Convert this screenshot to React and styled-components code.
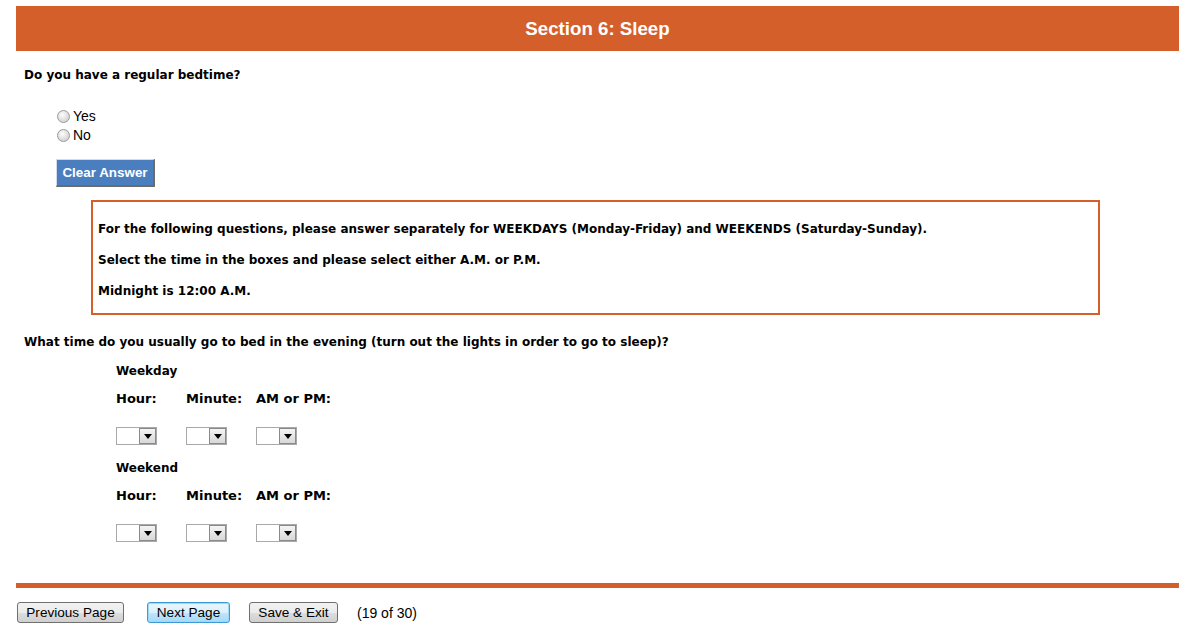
import React from "react";
import { styled, createGlobalStyle } from "styled-components";

const GlobalStyle = createGlobalStyle`
  body {
    margin: 0;
    background: #fff;
    font-family: "DejaVu Sans", Verdana, sans-serif;
    color: #000;
  }
`;

const Page = styled.div`
  width: 1194px;
  padding: 6px 15px 0 16px;
  box-sizing: border-box;
`;

const Header = styled.div`
  height: 45px;
  background: #d45f2b;
  color: #fff;
  font-family: "Liberation Sans", Arial, sans-serif;
  font-weight: bold;
  font-size: 18.7px;
  display: flex;
  align-items: center;
  justify-content: center;
`;

const Question = styled.div`
  font-size: 12px;
  font-weight: bold;
  padding-left: 8px;
  margin-top: ${(p) => p.$top}px;
  line-height: 14px;
`;

const Options = styled.div`
  display: flex;
  flex-direction: column;
  gap: 5px;
  padding-left: 41px;
  margin-top: 27px;
`;

const Option = styled.label`
  display: flex;
  align-items: center;
  gap: 3px;
  font-family: "Liberation Sans", Arial, sans-serif;
  font-size: 14px;
  height: 14px;
`;

const Radio = styled.span`
  width: 13px;
  height: 13px;
  border-radius: 50%;
  border: 1px solid #9a9a9a;
  background: radial-gradient(circle at 40% 35%, #fdfdfd, #d6d6d6 70%, #c4c4c4);
  box-sizing: border-box;
`;

const ClearButton = styled.button`
  margin: 17px 0 0 40px;
  width: 99px;
  height: 28px;
  background: #4a7ebf;
  color: #fff;
  font-family: "Liberation Sans", Arial, sans-serif;
  font-weight: bold;
  font-size: 13.4px;
  border: none;
  border-top: 1px solid #d0dcec;
  border-left: 1px solid #d0dcec;
  border-right: 2px solid #6b6b6b;
  border-bottom: 2px solid #6b6b6b;
  padding: 0;
  display: block;
  cursor: pointer;
`;

const InfoBox = styled.div`
  margin: 13px 0 0 75px;
  width: 1009px;
  height: 115px;
  box-sizing: border-box;
  border: 2px solid #d45f2b;
  padding: 20px 0 0 5px;
  display: flex;
  flex-direction: column;
  gap: 16px;
  font-size: 12px;
  font-weight: bold;
  line-height: 15px;
`;

const TimeBlock = styled.div`
  padding-left: 100px;
  margin-top: ${(p) => p.$top}px;
`;

const BlockTitle = styled.div`
  font-size: 12px;
  font-weight: bold;
  line-height: 14px;
`;

const FieldRow = styled.div`
  display: grid;
  grid-template-columns: 70px 70px 80px;
  margin-top: 14px;
  row-gap: 21px;
`;

const FieldLabel = styled.div`
  font-size: 13px;
  font-weight: bold;
  line-height: 14px;
`;

const Select = styled.span`
  display: flex;
  width: 41px;
  height: 18px;
  box-sizing: border-box;
  border: 1px solid #a9a9a9;
  background: #fff;
  justify-content: flex-end;
`;

const Arrow = styled.span`
  width: 17px;
  height: 16px;
  box-sizing: border-box;
  border: 1px solid #8a8a8a;
  background: linear-gradient(#f4f4f4, #d8d8d8);
  display: flex;
  align-items: center;
  justify-content: center;
  &::after {
    content: "";
    border-left: 4px solid transparent;
    border-right: 4px solid transparent;
    border-top: 5px solid #000;
  }
`;

const Divider = styled.div`
  height: 5px;
  background: #d45f2b;
  margin-top: 41px;
`;

const Footer = styled.div`
  display: flex;
  align-items: center;
  margin-top: 14px;
  padding-left: 1px;
  font-family: "Liberation Sans", Arial, sans-serif;
  font-size: 14px;
`;

const NavButton = styled.button`
  height: 21px;
  width: ${(p) => p.$w}px;
  margin-right: ${(p) => p.$gap}px;
  padding: 0;
  font-family: "Liberation Sans", Arial, sans-serif;
  font-size: 13.6px;
  color: #000;
  border-radius: 3px;
  border: 1px solid ${(p) => (p.$focus ? "#3c9ad6" : "#707070")};
  box-shadow: ${(p) => (p.$focus ? "inset 0 0 0 1px #9ed8f7" : "none")};
  background: ${(p) =>
    p.$focus
      ? "linear-gradient(#eaf6fd 0%, #d9f0fc 50%, #bee6fd 51%, #a7d9f5 100%)"
      : "linear-gradient(#f2f2f2 0%, #ebebeb 50%, #dddddd 51%, #cfcfcf 100%)"};
  cursor: pointer;
`;

const PageCount = styled.span`
  margin-left: 0;
`;

const TimeSection = ({ title, top }) => (
  <TimeBlock $top={top}>
    <BlockTitle>{title}</BlockTitle>
    <FieldRow>
      <FieldLabel>Hour:</FieldLabel>
      <FieldLabel>Minute:</FieldLabel>
      <FieldLabel>AM or PM:</FieldLabel>
      <Select>
        <Arrow />
      </Select>
      <Select>
        <Arrow />
      </Select>
      <Select>
        <Arrow />
      </Select>
    </FieldRow>
  </TimeBlock>
);

export default function App() {
  return (
    <Page>
      <GlobalStyle />
      <Header>Section 6: Sleep</Header>
      <Question $top={17}>Do you have a regular bedtime?</Question>
      <Options>
        <Option>
          <Radio />
          Yes
        </Option>
        <Option>
          <Radio />
          No
        </Option>
      </Options>
      <ClearButton>Clear Answer</ClearButton>
      <InfoBox>
        <div>
          For the following questions, please answer separately for WEEKDAYS
          (Monday-Friday) and WEEKENDS (Saturday-Sunday).
        </div>
        <div>Select the time in the boxes and please select either A.M. or P.M.</div>
        <div>Midnight is 12:00 A.M.</div>
      </InfoBox>
      <Question $top={20}>
        What time do you usually go to bed in the evening (turn out the lights
        in order to go to sleep)?
      </Question>
      <TimeSection title="Weekday" top={15} />
      <TimeSection title="Weekend" top={16} />
      <Divider />
      <Footer>
        <NavButton $w={107} $gap={23}>
          Previous Page
        </NavButton>
        <NavButton $w={83} $gap={19} $focus>
          Next Page
        </NavButton>
        <NavButton $w={89} $gap={19}>
          Save &amp; Exit
        </NavButton>
        <PageCount>(19 of 30)</PageCount>
      </Footer>
    </Page>
  );
}
